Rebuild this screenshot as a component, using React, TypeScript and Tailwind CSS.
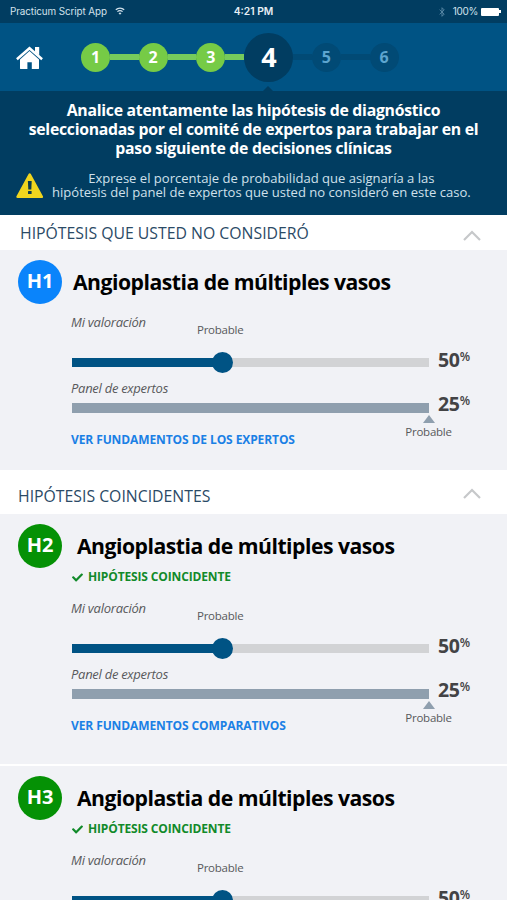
import { FaCheck } from "react-icons/fa"
import { clsx } from "clsx"

type Hypothesis = {
  id: string
  title: string
  matched: boolean
  mine: number
  experts: number
  link: string
}

const notConsidered: Hypothesis[] = [
  {
    id: "H1",
    title: "Angioplastia de múltiples vasos",
    matched: false,
    mine: 50,
    experts: 25,
    link: "VER FUNDAMENTOS DE LOS EXPERTOS",
  },
]

const matching: Hypothesis[] = [
  {
    id: "H2",
    title: "Angioplastia de múltiples vasos",
    matched: true,
    mine: 50,
    experts: 25,
    link: "VER FUNDAMENTOS COMPARATIVOS",
  },
  {
    id: "H3",
    title: "Angioplastia de múltiples vasos",
    matched: true,
    mine: 50,
    experts: 25,
    link: "VER FUNDAMENTOS COMPARATIVOS",
  },
]

const HomeIcon = () => (
  <svg width="28" height="24" viewBox="0 0 28 24" className="mt-0.5 shrink-0">
    <path d="M.9 13.300 L13.500 2.200 L26.100 13.300" fill="none" stroke="#fff" strokeWidth="2.500" />
    <path d="M19 1h4.200v8.500L19 5.800z" fill="#fff" />
    <path d="M13.500 5.100 L23 13.500v8.700q0 .9-.9.900H15.800v-6.900h-4.400v6.900H4.900q-.9 0-.9-.9V13.500z" fill="#fff" />
  </svg>
)

const WifiIcon = () => (
  <svg width="10" height="8" viewBox="0 0 11 9" fill="none" stroke="currentColor">
    <path d="M.8 3.200a6.700 6.700 0 0 1 9.400 0" strokeWidth="1.500" />
    <path d="M2.600 5.200a4.100 4.100 0 0 1 5.800 0" strokeWidth="1.400" />
    <path d="M5.500 8.600L3.900 6.900a2.300 2.300 0 0 1 3.200 0z" fill="currentColor" stroke="none" />
  </svg>
)

const BluetoothIcon = () => (
  <svg width="6" height="10" viewBox="0 0 6 10" fill="none" stroke="currentColor" strokeWidth=".9">
    <path d="M.6 2.700l4.600 4.400L3 9.300V.7l2.200 2.200L.6 7.300" />
  </svg>
)

const WarningIcon = () => (
  <svg width="28" height="27" viewBox="0 0 28 27" className="shrink-0">
    <path d="M13.700 2.600 L25.800 24.800H1.600z" fill="#efd51e" stroke="#efd51e" strokeWidth="2.600" strokeLinejoin="round" />
    <path d="M11.900 9h3.800l-.4 8.500h-3z" fill="#0b3a4e" />
    <rect x="12" y="18.900" width="3.600" height="3.200" rx=".5" fill="#0b3a4e" />
  </svg>
)

const StatusBar = () => (
  <div className="grid h-[23px] grid-cols-3 items-center bg-[#013d61] pr-2.5 pl-[10px] font-['Inter','Liberation_Sans',sans-serif] text-[#d3e2ec]">
    <div className="flex items-center gap-2">
      <span className="text-[9.900px] tracking-[-0.100px] whitespace-nowrap">Practicum Script App</span>
      <WifiIcon />
    </div>
    <span className="text-center text-[10.300px] font-semibold text-[#e6eff5]">4:21 PM</span>
    <div className="-mr-1 flex items-center justify-end">
      <span className="mr-[8px] text-[#5c8ba8]">
        <BluetoothIcon />
      </span>
      <span className="mr-[3px] text-[10px] tracking-[-0.300px]">100%</span>
      <span className="h-2 w-[18px] rounded-[1px] bg-white" />
      <span className="h-[3px] w-0.5 bg-white" />
    </div>
  </div>
)

const Step = ({ n }: { n: number }) => (
  <div
    className={clsx(
      "flex size-[29px] shrink-0 items-center justify-center rounded-full text-[16px] font-bold",
      n < 4 ? "bg-[#76cb46] text-white" : "bg-[#014a75] text-[#5da5cf]"
    )}
  >
    {n}
  </div>
)

const Steps = () => (
  <div className="flex items-center">
    <Step n={1} />
    <div className="h-1.5 w-[28.700px] bg-[#76cb5c]" />
    <Step n={2} />
    <div className="h-1.5 w-[28.700px] bg-[#76cb5c]" />
    <Step n={3} />
    <div className="h-1.5 w-[19px] bg-[#76cb5c]" />
    <div className="flex size-[49px] shrink-0 items-center justify-center rounded-full bg-[#013d61] text-[27px] font-bold text-white">
      4
    </div>
    <div className="h-1.5 w-[18.500px] bg-[#014a75]" />
    <Step n={5} />
    <div className="h-1.5 w-[28.700px] bg-[#014a75]" />
    <Step n={6} />
  </div>
)

const Banner = () => (
  <div className="relative h-[124px] bg-[#013d61] pt-[10px] text-center">
    {/* pointer up to the current step */}
    <svg width="10" height="5" viewBox="0 0 10 5" className="absolute -top-[5px] left-[263px]">
      <path d="M5 0l5 5H0z" fill="#013d61" />
    </svg>
    <h1 className="text-[15.800px] leading-[19.200px] font-bold tracking-[-0.270px] text-white">
      Analice atentamente las hipótesis de diagnóstico
      <br />
      seleccionadas por el comité de expertos para trabajar en el
      <br />
      paso siguiente de decisiones clínicas
    </h1>
    <div className="mt-[12px] flex items-center pl-4">
      <WarningIcon />
      <p className="ml-2 text-[13.050px] leading-[14.600px] whitespace-nowrap text-[#cfe0eb]">
        Exprese el porcentaje de probabilidad que asignaría a las
        <br />
        hipótesis del panel de expertos que usted no consideró en este caso.
      </p>
    </div>
  </div>
)

const SectionHeader = ({ title, className }: { title: string; className: string }) => (
  <div className={clsx("flex items-center justify-between bg-white pr-[26px] text-[15.800px] text-[#2b4a66]", className)}>
    <h2>{title}</h2>
    <svg width="18" height="11" viewBox="0 0 18 11">
      <path d="M1 10L9 2l8 8" fill="none" stroke="#c6c8ca" strokeWidth="2.200" />
    </svg>
  </div>
)

const Percent = ({ value }: { value: number }) => (
  <span className="flex items-start text-[19.500px] leading-5 font-bold tracking-[-0.300px] text-[#434345]">
    {value}
    <span className="text-[12px] leading-[13px] font-semibold">%</span>
  </span>
)

const HypothesisCard = ({ item }: { item: Hypothesis }) => (
  <article className={clsx("bg-[#f1f2f6] pt-2.5", item.matched ? "h-[250px]" : "h-[220px]")}>
    <div className="flex h-11 items-center pl-[18px]">
      <div
        className={clsx(
          "flex size-11 items-center justify-center rounded-full pb-0.5 text-[20px] font-bold tracking-[-0.200px] text-white",
          item.matched ? "bg-[#059105]" : "bg-[#0a84fb]"
        )}
      >
        {item.id}
      </div>
      <h3
        className={clsx(
          "pb-px text-[21.200px] font-bold tracking-[-0.500px] whitespace-nowrap text-black",
          item.matched ? "ml-[15px]" : "ml-[11px]"
        )}
      >
        {item.title}
      </h3>
    </div>

    <div className="pl-[71px]">
      {item.matched && (
        <div className="flex h-[22px] items-center gap-[5px] pb-1 text-[12px] font-bold tracking-[-0.140px] text-[#118a2a]">
          <FaCheck className="ml-px size-[11px]" />
          HIPÓTESIS COINCIDENTE
        </div>
      )}

      <div className="flex h-12 items-start text-[#58595b]">
        <span className="w-[126px] pt-[9px] text-[13px] leading-[18px] tracking-[-0.240px] italic">Mi valoración</span>
        <span className="pt-[17px] text-[11.500px] leading-[18px] tracking-[-0.250px]">Probable</span>
      </div>

      <div className="flex h-[21px] items-center">
        <div className="ml-px flex h-[21px] w-[357px] items-center bg-[linear-gradient(#d2d3d5,#d2d3d5)] bg-[length:100%_9px] bg-center bg-no-repeat">
          <div className="h-[9px] bg-[#005384]" style={{ width: `${item.mine - 8}%` }} />
          <div className="-ml-[10px] size-[21px] shrink-0 rounded-full bg-[#005384]" />
        </div>
        <div className="mb-[5px] ml-[9px]">
          <Percent value={item.mine} />
        </div>
      </div>

      <div className="flex h-[30px] items-start pt-1.5">
        <span className="text-[13px] leading-[18px] tracking-[-0.280px] text-[#58595b] italic">Panel de expertos</span>
      </div>

      <div className="flex h-2.5 items-center">
        <div className="ml-px h-2.5 w-[357px] bg-[#8f9fae]" />
        <div className="mb-[9px] ml-[9px]">
          <Percent value={item.experts} />
        </div>
      </div>

      <div className="flex items-start">
        <a className="w-[330px] pt-[18px] text-[12px] leading-[18px] font-bold tracking-[-0.100px] whitespace-nowrap text-[#1a80e5]">
          {item.link}
        </a>
        <div className="ml-1 flex w-[47px] flex-col items-center pt-0.5 text-[#58595b]">
          <svg width="12" height="8" viewBox="0 0 12 8">
            <path d="M6 0l6 8H0z" fill="#8f9fae" />
          </svg>
          <span className="text-[11.500px] leading-[18px] tracking-[-0.250px]">Probable</span>
        </div>
      </div>
    </div>
  </article>
)

const App = () => {
  return (
    <main className="h-[900px] w-[507px] overflow-hidden bg-[#f1f2f6] font-['Open_Sans','Noto_Sans',sans-serif]">
      <StatusBar />

      <header className="flex h-[68px] items-center bg-[#005384] pl-4">
        <HomeIcon />
        <div className="ml-[37px]">
          <Steps />
        </div>
      </header>

      <Banner />

      <SectionHeader title="HIPÓTESIS QUE USTED NO CONSIDERÓ" className="h-[35px] pt-[2px] pl-5 [&>svg]:mt-[3px]" />
      {notConsidered.map((item) => (
        <HypothesisCard key={item.id} item={item} />
      ))}

      <SectionHeader title="HIPÓTESIS COINCIDENTES" className="h-11 pt-[9px] pl-[18px] [&>svg]:-mt-[7px]" />
      <div className="flex flex-col gap-0.5 bg-white">
        {matching.map((item) => (
          <HypothesisCard key={item.id} item={item} />
        ))}
      </div>
    </main>
  )
}

export default App
